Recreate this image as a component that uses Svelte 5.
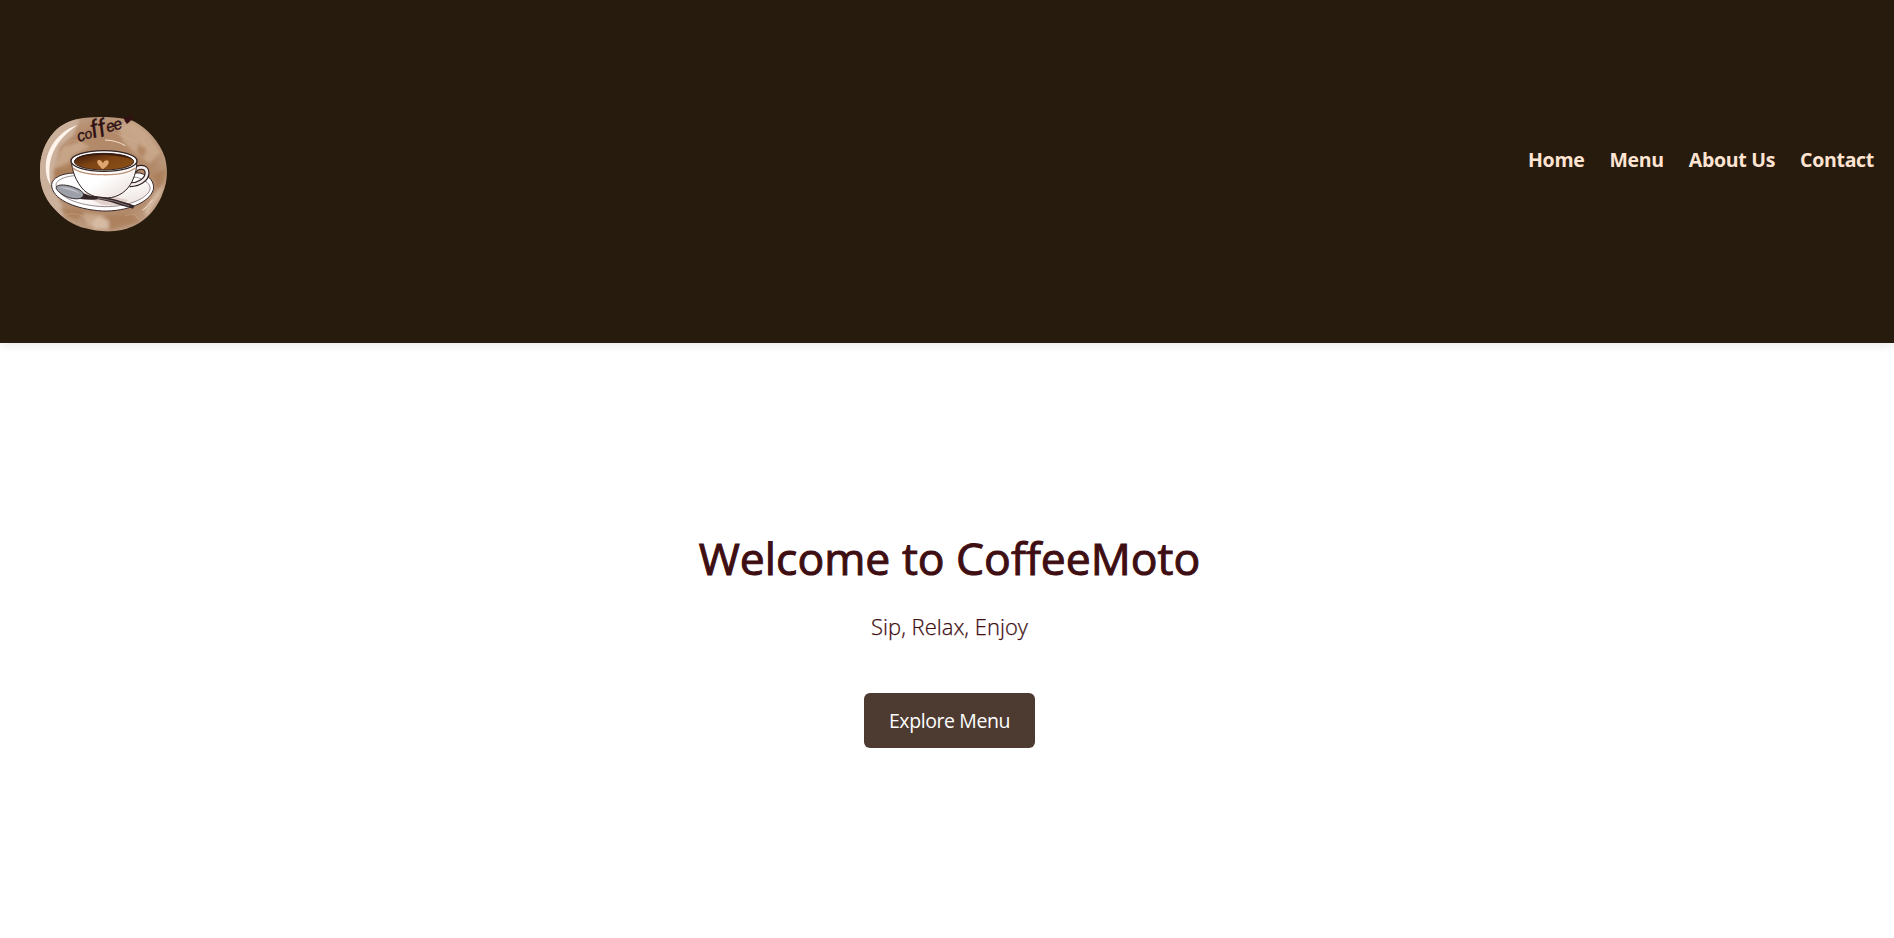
<script>
  const links = ['Home', 'Menu', 'About Us', 'Contact'];
</script>

<div class="page">
  <header>
    <svg class="logo" viewBox="0 0 450 405" role="img" aria-label="coffee">
      <defs>
        <clipPath id="disc"><path d="M144 42C190 33 265 34 310 48C352 70 389 110 405 158C414 194 413 232 397 268C380 315 340 357 290 371C248 383 205 381 167 370C131 362 99 341 71 309C43 279 29 240 30 199C29 153 44 112 73 80C93 60 117 47 144 42Z" /></clipPath>
        <radialGradient id="wash"><stop offset="0" stop-color="#b48a68" /><stop offset=".65" stop-color="#b28a6a" /><stop offset="1" stop-color="#c2a48c" /></radialGradient>
        <linearGradient id="brew" x2="1" y2="1"><stop offset="0" stop-color="#35160a" /><stop offset=".45" stop-color="#7d4313" /><stop offset="1" stop-color="#8e5317" /></linearGradient>
        <linearGradient id="china" x2="1" y2="1"><stop offset=".5" stop-color="#fff" /><stop offset="1" stop-color="#e6d8d3" /></linearGradient>
        <filter id="soft"><feGaussianBlur stdDeviation="5" /></filter>
        <filter id="fine"><feGaussianBlur stdDeviation="1.2" /></filter>
      </defs>
      <g clip-path="url(#disc)">
        <path fill="url(#wash)" d="M0 0H450V405H0Z" />
        <g filter="url(#soft)">
          <path fill="#cbb09b" d="M25 100L80 50L150 40L130 90L90 125L70 200L70 250L110 330L80 340L25 250Z" />
          <path fill="#ceae92" opacity=".75" d="M260 60L310 52L350 82L391 141L360 175L320 150L280 110ZM100 125L150 110L180 125L125 152L112 190L70 190ZM160 325L220 329L230 370L170 362Z" />
          <path fill="#a6774f" opacity=".6" d="M75 190L121 170L131 205L72 222ZM90 307L160 318L140 345L100 329ZM232 335L305 326L330 350L240 374ZM325 118L350 132L340 160L320 142ZM370 210L410 190L389 275Z" />
          <path fill="#d9bfa9" opacity=".8" d="M184 354L204 335L238 347L235 372L192 373ZM342 315L375 265L402 235L392 270L350 335Z" />
        </g>
        <g fill="none" stroke="#d7b79c" stroke-width="2" opacity=".6" filter="url(#fine)">
          <path d="M70 160Q94 145 110 119T160 117M245 79L279 95L314 109L335 101L360 140M105 330Q139 319 162 337T223 345M285 331L314 328L327 344" />
        </g>
        <path fill="#fff3ea" filter="url(#fine)" d="M144 60C95 73 55 120 48 172C45 205 52 226 62 241C56 204 56 171 71 139C87 105 113 79 144 60Z" />
        <path fill="none" stroke="#f4dfca" stroke-width="3" filter="url(#fine)" d="M225 105Q259 106 286 122M337 316Q357 302 368 284" />
      </g>
      <path fill="#fff" stroke="#3b292c" stroke-width="3" d="M132 204C93 205 66 220 65 239C64 281 133 313 218 318C291 320 359 292 370 254C374 230 359 213 330 204Z" />
      <path fill="url(#china)" stroke="#665357" stroke-width="2" d="M134 212C103 214 78 226 78 240C82 275 142 302 222 305C292 306 350 282 360 254C363 237 346 224 320 217Z" />
      <path fill="#d8c0b9" opacity=".65" filter="url(#fine)" d="M162 266L175 249L206 272L255 276L295 285L276 302L217 299L186 285Z" />
      <path fill="none" stroke="#2f2020" stroke-width="15" d="M312 199C322 183 350 182 351 202C352 225 324 240 299 239" />
      <path fill="none" stroke="#f4ecea" stroke-width="8" d="M312 199C322 183 350 182 351 202C352 225 324 240 299 239" />
      <path fill="url(#china)" stroke="#2e2220" stroke-width="3" d="M124 163C125 197 138 231 162 256C181 273 203 279 232 279C266 277 292 259 307 228C317 207 321 186 320 169Z" />
      <path fill="none" stroke="#bd9274" stroke-width="4" d="M128 188C159 215 278 217 316 189" />
      <ellipse cx="222" cy="168" rx="99" ry="31" fill="#fffdfc" stroke="#302322" stroke-width="4" />
      <ellipse cx="222" cy="170" rx="89" ry="25" fill="url(#brew)" stroke="#35201a" stroke-width="3" />
      <path fill="#34170c" opacity=".8" d="M136 162Q151 147 211 145Q286 144 308 164Q281 153 228 150Q163 149 136 162Z" />
      <path fill="#dfa66f" d="M218 193C209 184 200 176 202 169C204 162 215 165 219 175C222 165 233 164 236 169C238 178 228 187 218 193Z" />
      <path fill="#332427" d="M155 263C170 268 183 274 198 274C240 277 280 290 314 302L309 311C278 304 245 290 204 283C184 286 167 284 150 282Z" />
      <path fill="none" stroke="#a99d9e" stroke-width="2" d="M203 279Q251 285 299 303" />
      <path fill="#9da0a8" stroke="#33282c" stroke-width="3" d="M79 246C82 237 113 238 137 249C158 257 165 267 158 276C148 287 111 281 91 264C82 257 77 251 79 246Z" />
      <path fill="#c5c8ce" d="M89 247C108 244 140 254 149 266C128 257 110 253 89 247Z" />
      <g class="script" transform="translate(149 110) rotate(-18)">
        <text><tspan x="-3" font-size="48">c</tspan><tspan x="20" font-size="41">o</tspan><tspan x="42" y="3" font-size="75">f</tspan><tspan x="64" y="7" font-size="75">f</tspan><tspan x="89" y="0" font-size="47">e</tspan><tspan x="111" y="1" font-size="47">e</tspan></text>
      </g>
      <path fill="#341014" d="M291 57C285 49 280 43 284 37C288 34 293 38 294 42C299 34 305 30 309 34C311 40 300 49 291 57Z" />
    </svg>
    <nav>
      {#each links as link}<a href="#top">{link}</a>{/each}
    </nav>
  </header>
  <main>
    <h1>Welcome to CoffeeMoto</h1>
    <p>Sip, Relax, Enjoy</p>
    <button>Explore Menu</button>
  </main>
</div>

<style>
  :global(body) { margin: 0; background: #fff; }
  .page { height: 938px; overflow: hidden; font-family: "Open Sans", "Noto Sans", sans-serif; color: #3e0e12; }
  header { box-sizing: border-box; height: 343px; padding: 0 20px 0 30px; display: flex; justify-content: space-between; align-items: flex-start; background: #271b0d; box-shadow: 0 2px 10px rgb(0 0 0 / 10%); }
  .logo { width: 150px; height: 135px; margin-top: 105px; }
  .script { font-family: "Liberation Sans", sans-serif; font-style: italic; fill: #2e1014; stroke: #2e1014; stroke-width: 1; }
  nav { display: flex; gap: 25px; margin-top: 146px; }
  a { color: #ffe4d2; font-size: 19.5px; line-height: 28px; font-weight: 700; text-decoration: none; white-space: nowrap; letter-spacing: -.3px; }
  main { display: flex; flex-direction: column; align-items: center; padding: 179px 0 0 5px; }
  h1 { margin: 0; font-size: 44.5px; line-height: 72px; font-weight: 500; white-space: nowrap; -webkit-text-stroke: 1px currentColor; }
  p { margin: 14px 0 0; font-size: 22px; line-height: 36px; font-weight: 300; -webkit-text-stroke: .25px currentColor; }
  button { width: 171px; height: 55px; margin-top: 49px; padding: 0; border: 0; border-radius: 6px; background: #4d3a31; color: #fff; font: 400 19.5px "Open Sans", sans-serif; letter-spacing: -.4px; }
</style>
